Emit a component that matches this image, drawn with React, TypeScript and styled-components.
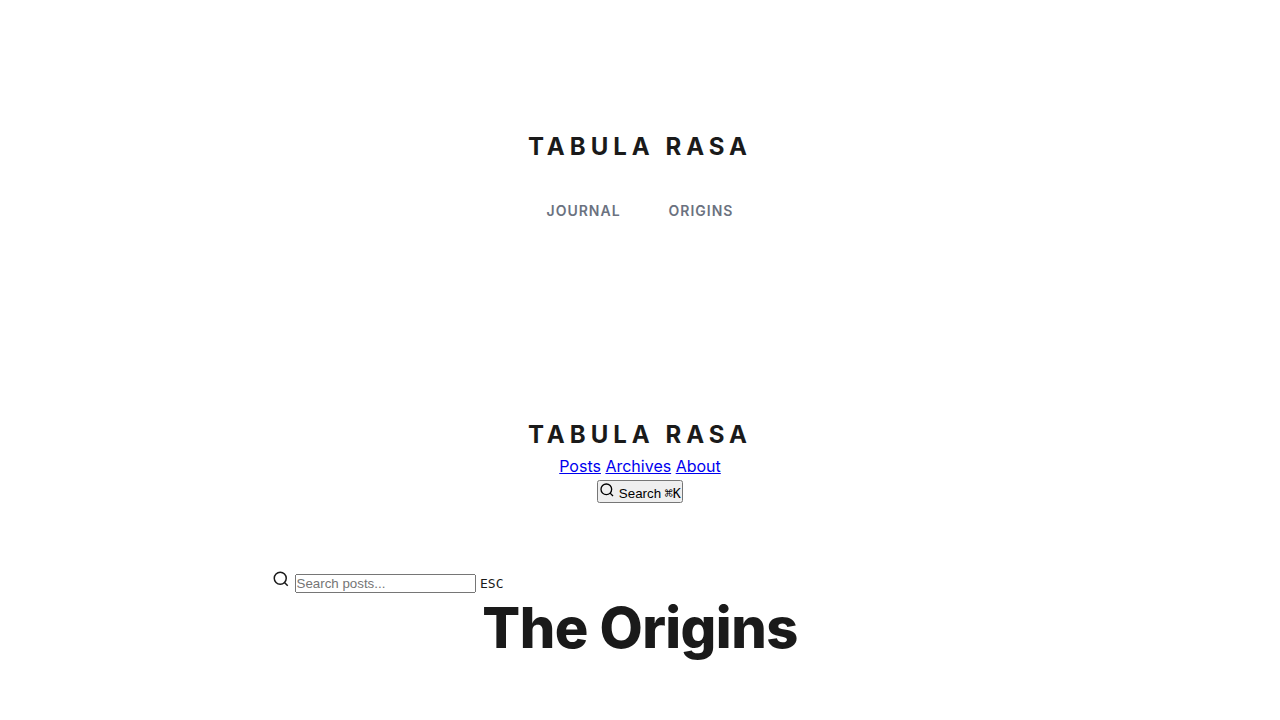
import React from 'react';
import styled, { createGlobalStyle } from 'styled-components';

const GlobalStyle = createGlobalStyle`
  * {
    margin: 0;
    padding: 0;
    box-sizing: border-box;
  }

  body {
    background: #ffffff;
    color: #1a1a1a;
    font-family: Inter, sans-serif;
    line-height: 1.6;
  }
`;

const Page = styled.div`
  max-width: 800px;
  margin: 0 auto;
  padding: 0 32px;
`;

const Header = styled.header<{ $top: number; $bottom: number }>`
  padding: ${(p) => p.$top}px 0 ${(p) => p.$bottom}px;
  text-align: center;
`;

const SiteTitle = styled.a`
  display: block;
  color: #1a1a1a;
  font-size: 24px;
  font-weight: 700;
  letter-spacing: 5px;
  text-decoration: none;
  text-transform: uppercase;
`;

const NavList = styled.ul`
  display: flex;
  justify-content: center;
  gap: 48px;
  margin-top: 32px;
  list-style: none;
`;

const NavLink = styled.a`
  color: #6b7280;
  font-size: 14px;
  font-weight: 600;
  letter-spacing: 1px;
  text-decoration: none;
  text-transform: uppercase;
`;

const Icon = styled.svg`
  fill: none;
  stroke: currentColor;
  stroke-width: 2;
`;

const Key = styled.kbd`
  font-family: monospace;
`;

const SearchBar = styled.div`
  text-align: left;
`;

const PageTitle = styled.h1`
  font-size: 56px;
  font-weight: 800;
  line-height: 1.2;
  letter-spacing: -0.01em;
  text-align: center;
`;

const SearchIcon = ({ size }: { size: number }) => (
  <Icon width={size} height={size} viewBox="0 0 24 24" aria-hidden="true">
    <circle cx="11" cy="11" r="8" />
    <path d="m21 21-4.35-4.35" />
  </Icon>
);

export default function App() {
  return (
    <>
      <GlobalStyle />
      <Page>
        <Header $top={128} $bottom={192}>
          <SiteTitle href="#">Tabula Rasa</SiteTitle>
          <nav>
            <NavList>
              <li><NavLink href="#journal">Journal</NavLink></li>
              <li><NavLink href="#origins">Origins</NavLink></li>
            </NavList>
          </nav>
        </Header>
        <Header $top={0} $bottom={64}>
          <SiteTitle href="#">Tabula Rasa</SiteTitle>
          <nav>
            <a href="#posts">Posts</a> <a href="#archives">Archives</a> <a href="#about">About</a>
          </nav>
          <button type="button" aria-label="Search">
            <SearchIcon size={16} /> <span>Search</span> <Key>⌘K</Key>
          </button>
        </Header>
        <SearchBar>
          <SearchIcon size={18} /> <input type="text" placeholder="Search posts..." aria-label="Search posts" /> <Key>ESC</Key>
        </SearchBar>
        <PageTitle>The Origins</PageTitle>
      </Page>
    </>
  );
}
